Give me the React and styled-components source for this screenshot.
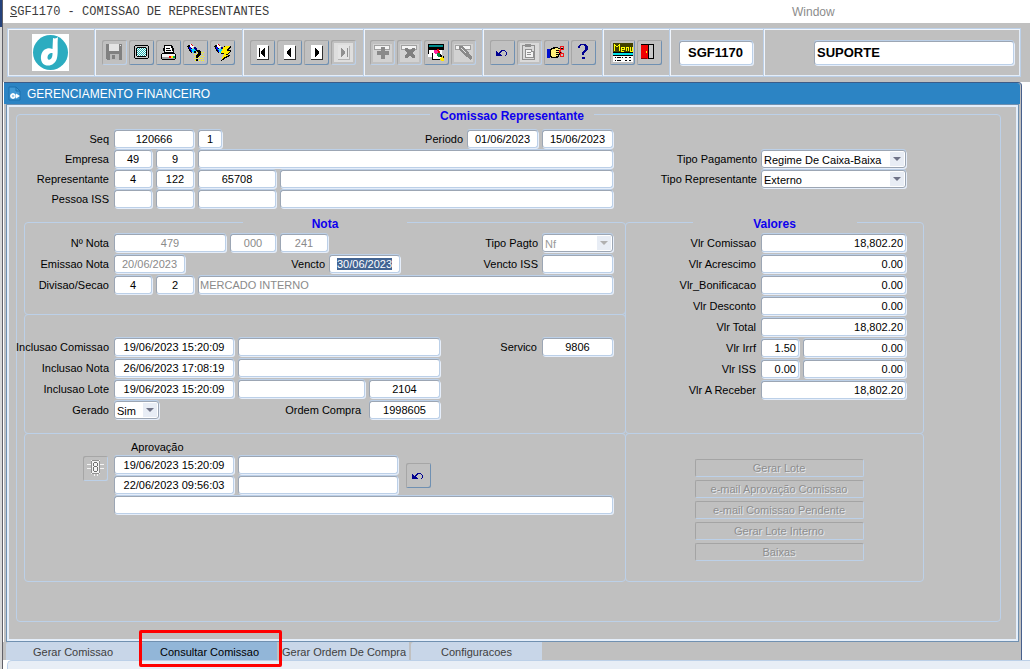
import React, { useEffect, useRef } from "react";
import styled, { createGlobalStyle, css } from "styled-components";

const GlobalStyle = createGlobalStyle`
  * {
    box-sizing: border-box;
  }

  body {
    margin: 0;
    background: #ffffff;
    color: #000000;
    font-family: "Liberation Sans", Arial, sans-serif;
    font-size: 11px;
    line-height: 14px;
  }

  button,
  input,
  select {
    margin: 0;
    font: inherit;
    color: inherit;
  }
`;

const Shell = styled.div`
  display: flex;
  min-height: 100vh;
  background: #ffffff;
`;

const DesktopEdge = styled.div`
  flex: none;
  width: 3px;
  border-right: 1px solid #606068;
  background: linear-gradient(#24427c 27px, #d8d8d8 27px);
`;

const Main = styled.div`
  flex: 1;
  min-width: 0;
  display: flex;
  flex-direction: column;
`;

const MenuBar = styled.header`
  display: flex;
  align-items: center;
  height: 23px;
  padding-left: 7px;
  background: #ffffff;
`;

const WindowTitle = styled.h1`
  flex: 782;
  margin: 0;
  font-family: "Liberation Mono", monospace;
  font-size: 12px;
  font-weight: normal;
  color: #3c3c3c;
`;

const MenuLink = styled.a`
  flex: 238;
  font-size: 12px;
  color: #8c8c8c;
  text-decoration: none;
`;

const ToolbarArea = styled.div`
  padding: 5px 9px 5px 4px;
  background: #c0c0c0;
`;

const Toolbar = styled.div`
  display: flex;
  height: 49px;
  border: 1px solid #bcd0e8;
  border-width: 1px 1px 1px 0;
  box-shadow: inset 0 1px #f0f5fc, inset -1px -1px #e4edf8;
`;

const ToolGroup = styled.div`
  flex: ${(props) => (props.$grow ? "1" : "none")};
  width: ${(props) => props.$width}px;
  display: flex;
  align-items: center;
  justify-content: ${(props) => (props.$grow ? "flex-end" : "center")};
  gap: 2px;
  padding-right: ${(props) => (props.$grow ? "6px" : "0")};
  border-left: 1px solid #bcd0e8;
  box-shadow: inset 1px 0 #f0f5fc;
`;

const PlainGroup = styled(ToolGroup)`
  padding-right: 2px;
`;

const ToolButton = styled.button`
  flex: none;
  width: 25px;
  height: 25px;
  padding: 0;
  border: none;
  border-radius: 2px;
  background: #c0c0c0;
  box-shadow: inset 1px 1px #a6a6a6,
    inset -1px -1px ${(props) => (props.disabled ? "#bcd0e8" : "#6f90b2")};

  svg {
    display: block;
    shape-rendering: crispEdges;
  }
`;

const fieldFrame = css`
  height: 18px;
  border: 1px solid;
  border-color: #9ca6b4 #bcd0e8 #bcd0e8 #9ca6b4;
  border-radius: 3px;
  background: #ffffff;
  box-shadow: 0 -1px #bcd0e8, 1px 1px #e6eefa;
`;

const Field = styled.input`
  ${fieldFrame}
  flex: ${(props) => (props.$width ? "none" : "1")};
  width: ${(props) => (props.$width ? `${props.$width}px` : "100%")};
  min-width: 0;
  padding: ${(props) => (props.$align === "left" ? "0 1px" : "0 2px")};
  text-align: ${(props) => props.$align || "center"};
  outline: none;

  &:disabled {
    color: #8a8a8a;
    background: #ffffff;
  }

  &::selection {
    background: rgba(64, 98, 146, 0.99);
    color: #ffffff;
  }
`;

const HeaderField = styled(Field)`
  flex: none;
  height: 24px;
  padding: 0 2px;
  font-size: 13px;
  font-weight: bold;
`;

const SelectFrame = styled.span`
  position: relative;
  flex: none;
  width: ${(props) => props.$width}px;
  height: 18px;

  svg {
    position: absolute;
    top: 2px;
    right: 2px;
    pointer-events: none;
  }
`;

const Select = styled.select`
  ${fieldFrame}
  display: block;
  width: 100%;
  padding: 2px 2px 0;
  appearance: none;
  border-color: #9ca6b4;

  &:disabled {
    color: #9a9a9a;
    opacity: 1;
  }
`;

const AppWindow = styled.main`
  margin: 0 8px 0 1px;
  border-top: 1px solid #3c5c88;
  border-right: 1px solid #48608c;
  border-radius: 0 4px 0 0;
  background: #c0c0c0;
`;

const TitleBar = styled.div`
  display: flex;
  align-items: center;
  gap: 6px;
  height: 21px;
  margin-right: 1px;
  padding-left: 4px;
  background: #2c84c4;
  color: #ffffff;
  border-radius: 0 3px 0 0;
`;

const TitleText = styled.h2`
  margin: 0;
  font-size: 12px;
  font-weight: normal;
`;

const Pane = styled.div`
  margin: 0 2px;
  padding: 1px 17px 19px 9px;
  border: 1px solid #7090b0;
  box-shadow: inset 0 0 0 2px #e4eefa;
`;

const frameLine = css`
  min-width: 0;
  margin: 0;
  padding: 0;
  border: 1px solid #bcd0e8;
  border-radius: 4px;
`;

const OuterFrame = styled.fieldset`
  ${frameLine}
  padding: 8px 0 39px 7px;
`;

const Legend = styled.legend`
  width: 164px;
  margin: 0 auto;
  padding: 4px 0 0;
  font-size: 12px;
  font-weight: bold;
  line-height: 12px;
  text-align: center;
  color: #0d00ee;
`;

const FormGrid = styled.div`
  display: grid;
  grid-template-columns: minmax(0, 602fr) minmax(0, 298fr) minmax(0, 76fr);
`;

const Rows = styled.div`
  display: flex;
  flex-direction: column;
  gap: ${(props) => props.$gap}px;
`;

const HeadRows = styled(Rows)`
  padding: 0 13px 6px 1px;
`;

const TypeRows = styled(Rows)`
  padding: 20px 18px 0 0;
`;

const NotaRows = styled(Rows)`
  padding-right: 12px;
`;

const ValoresRows = styled(Rows)`
  padding-right: 17px;
`;

const Row = styled.div`
  display: flex;
  align-items: center;
  gap: 4px;
`;

const RightPart = styled.div`
  display: flex;
  align-items: center;
  gap: 4px;
  margin-left: auto;
`;

// Long captions run out to the left over the frame line
const Caption = styled.label`
  flex: none;
  display: flex;
  justify-content: flex-end;
  width: ${(props) => (props.$width ? `${props.$width}px` : "auto")};
  padding-right: ${(props) => props.$pad || 0}px;
  white-space: nowrap;
`;

const RowCaption = styled(Caption)`
  width: 85px;
  padding-right: 1px;
`;

const NotaFrame = styled.fieldset`
  ${frameLine}
  padding: 4px 0 20px;
`;

const InclusaoFrame = styled.section`
  ${frameLine}
  grid-column: 1;
  margin-top: -1px;
  padding: 23px 12px 14px 0;
`;

const AprovacaoFrame = styled.section`
  ${frameLine}
  grid-column: 1;
  margin-top: -1px;
  padding: 6px 12px 67px 0;
`;

const AprovacaoTitle = styled.h3`
  margin: 0 0 2px 106px;
  font-size: 11px;
  font-weight: normal;
`;

const AprovacaoBody = styled.div`
  display: flex;
  align-items: flex-start;
  gap: 6px;
  padding-left: 58px;
`;

const AprovacaoFields = styled(Rows)`
  flex: 1;
`;

const AprovacaoPair = styled.div`
  display: flex;
  align-items: center;
  gap: 8px;
`;

const ValoresFrame = styled.fieldset`
  ${frameLine}
  grid-column: 2;
  grid-row: 2 / span 2;
  margin-left: -1px;
  padding: 4px 0 0;
`;

const ActionsFrame = styled.section`
  ${frameLine}
  grid-column: 2;
  grid-row: 4;
  display: flex;
  flex-direction: column;
  align-items: center;
  gap: 3px;
  margin: -1px 0 0 -1px;
  padding: 25px 0 0 9px;
`;

const ActionButton = styled.button`
  width: 169px;
  height: 18px;
  padding: 0;
  border: 1px solid;
  border-color: #a4a4a4 #bcd0e8 #bcd0e8 #a4a4a4;
  border-radius: 2px;
  background: #c0c0c0;

  &:disabled {
    color: #8e8e8e;
    text-shadow: 1px 1px #e4e8ee;
  }
`;

const TabBar = styled.nav`
  display: flex;
  height: 18px;
  margin-right: 8px;
  padding-left: 3px;
  border-right: 1px solid #48608c;
  background: #c0c0c0;
`;

const Tab = styled.button`
  position: relative;
  z-index: ${(props) => (props.$active ? 1 : 0)};
  width: ${(props) => props.$width}px;
  margin-right: 2px;
  padding: 2px 0 0;
  border: none;
  border-radius: 3px 0 0 0;
  background: ${(props) => (props.$active ? "#92b6d8" : "#c8d6e8")};
  color: ${(props) => (props.$active ? "#000000" : "#404040")};
  white-space: nowrap;
`;

const Marker = styled.span`
  position: absolute;
  inset: -12px -5px -7px -3px;
  border: 3px solid #ff0000;
  border-radius: 2px;
  pointer-events: none;
`;

const StatusBar = styled.footer`
  flex: 1;
  min-height: 9px;
  margin-left: 4px;
  border-top: 1px solid #bcd0e8;
  border-left: 1px solid #bcd0e8;
  border-radius: 5px 0 0 0;
  background: #e8eef6;
`;

const Icon = ({ children }) => (
  <svg width="25" height="25" viewBox="0 0 25 25" aria-hidden="true">
    {children}
  </svg>
);

const Logo = () => (
  <svg width="37" height="37" viewBox="0 0 37 37" role="img" aria-label="Logo">
    <rect width="37" height="37" fill="#fff" />
    <circle cx="18.5" cy="18.5" r="17.5" fill="#2cacc0" />
    <path
      d="M21 4 C23 5 25 4 26 3 C25 11 26.500 18 25 24 C23.500 30 18 33 13 31 C8 29 7.500 20 12 16 C15 14 18 14 20.500 15 Z"
      fill="#fff"
    />
    <path
      d="M20.500 19 C17 19 15.500 21 15.500 24 C16 27 19 26 20 23 C20.500 22 20.500 20 20.500 19Z"
      fill="#2cacc0"
    />
  </svg>
);

const FormIcon = () => (
  <svg width="13" height="15" viewBox="0 0 13 15" aria-hidden="true">
    <path d="M1 1h7l4 4v9H1z" fill="#3f97d3" stroke="#1d70ad" />
    <path d="M8 1v4h4" fill="none" stroke="#1d70ad" />
    <circle cx="5" cy="10" r="2" fill="none" stroke="#fff" strokeWidth="1.5" />
    <path d="M8 7.500l4 2.500-4 2.500z" fill="#fff" />
    <path d="M5 7v6M2 10h2" stroke="#fff" />
  </svg>
);

const SaveIcon = () => (
  <Icon>
    <path d="M4 4h16v16H5l-1-1z" fill="#808080" />
    <path d="M7 4h10v7H7z" fill="#e4e4e4" />
    <path d="M8 14h9v6H8z" fill="#b8b8b8" />
    <path d="M10 15h3v4h-3z" fill="#808080" />
    <path d="M18 5h1v1h-1z" fill="#e4e4e4" />
  </Icon>
);

const ScreenIcon = () => (
  <Icon>
    <path d="M6 5h13v1h1v12h-1v1H6v-1H5V6h1z" fill="#000" />
    <path d="M6 6h13v12H6z" fill="#c8c8c8" />
    <path d="M8 7h9v1h1v8h-1v1H8v-1H7V8h1z" fill="#000" />
    <path d="M8 8h9v8H8z" fill="#fff" />
    <path
      d="M8 8.500h9M9 9.500h8M8 10.500h9M9 11.500h8M8 12.500h9M9 13.500h8M8 14.500h9M9 15.500h8"
      stroke="#20b0b0"
      strokeDasharray="1 1"
    />
  </Icon>
);

const PrinterIcon = () => (
  <Icon>
    <path d="M8 5h8v1h1v2h1v5H8v-2H7V8h1z" fill="#000" />
    <path d="M9 6h6l2 6H9z" fill="#fff" />
    <path d="M10 8h4v1h-4zM10 10h5v1h-5z" fill="#000" />
    <path d="M6 13h13v1h1v5h-1v1H6v-1H5v-5h1z" fill="#000" />
    <path d="M6 14h13v3H6z" fill="#f4f4f4" />
    <path d="M6 17h13v2H6z" fill="#a0a0a0" />
    <path d="M13 16h2v2h-2z" fill="#f00" />
    <path d="M15 16h2v2h-2z" fill="#fe0" />
    <path d="M17 16h2v2h-2z" fill="#0a4" />
  </Icon>
);

const Torch = () => (
  <>
    <path d="M5 5h2v2h1v1h1v5H8v-1H7v-1H6V9H5V7H4V6h1z" fill="#000" />
    <path d="M6 7h2v2h1v3H8v-2H7V9H6z" fill="#00f" />
    <path d="M8 9h4v1h1v3h-3v-1H9v-2H8z" fill="#00d8ff" />
    <path d="M11 7h2v1h1v2h-2V9h-1z" fill="#000080" />
    <path d="M7 4h1v1h1v1h2v1h-1v1H8V7H7z" fill="#fff" />
    <path d="M8 4h1v1h1v1H9V5H8z" fill="#e00000" />
  </>
);

const QueryIcon = () => (
  <Icon>
    <path
      d="M12 12.500h9M11 14.500h10M12 16.500h9M11 18.500h10M12 20.500h9"
      stroke="#ff0"
      strokeDasharray="1 1"
    />
    <Torch />
    <path
      d="M13 10h4v1h1v4h-1v1h-1v1h-1v1h-2v-3h1v-1h1v-2h-1v-1h-1v2h-2v-2h1zM13 19h2v2h-2z"
      fill="#000"
    />
  </Icon>
);

const ExecuteIcon = () => (
  <Icon>
    <Torch />
    <path
      d="M14 6h7v2h-1v1h-1v1h2v2h-1v1h-1v1h-1v1h2v1h-1v1h-2v1h-2v1h-1v1h-2v1h-1v-1h1v-2h1v-2h1v-2h-3v-2h1V9h1V7h1z"
      fill="#000"
    />
    <path
      d="M15 6h5v1h-1v1h-1v1h-1v2h3v1h-1v1h-1v1h-2v1h2v1h-2v1h-2v1h-1v1h-1v-2h1v-2h1v-2h-3v-2h1V9h1V7h1z"
      fill="#ffed00"
    />
  </Icon>
);

const NavIcon = ({ d, off }) => (
  <Icon>
    {off && <path d="M3 3h19v19H3z" fill="#dedede" />}
    <path d="M7 6h12v14H7z" fill={off ? "#b4b4b4" : "#303030"} />
    <path d="M7 5h11v14H7z" fill={off ? "#e4e4e4" : "#fff"} />
    <path d={d} fill={off ? "#909090" : "#000"} />
  </Icon>
);

const NAV_FIRST = "M9 8h1v9H9zM14 8h1v9h-1v-1h-1v-1h-1v-1h-1v-3h1v-1h1V9h1z";
const NAV_PREV = "M13 8h1v9h-1v-1h-1v-1h-1v-1h-1v-3h1v-1h1V9h1z";
const NAV_NEXT = "M11 8h1v1h1v1h1v1h1v3h-1v1h-1v1h-1v1h-1z";
const NAV_LAST = "M10 8h1v1h1v1h1v1h1v3h-1v1h-1v1h-1v1h-1zM16 8h1v9h-1z";

const RecordBase = () => (
  <>
    <path d="M3 4h19v18H3z" fill="#d2d2d2" />
    <path d="M4 5h16v5H4z" fill="#a0a0a0" />
    <path d="M5 6h14v3H5z" fill="#f4f4f4" />
  </>
);

const InsertIcon = () => (
  <Icon>
    <RecordBase />
    <path d="M11 7h4v4h4v4h-4v4h-4v-4H7v-4h4z" fill="#8a8a8a" />
  </Icon>
);

const RemoveIcon = () => (
  <Icon>
    <RecordBase />
    <path
      d="M8 8h3v1h1v1h2V9h1V8h3v3h-1v1h-1v2h1v1h1v3h-3v-1h-1v-1h-2v1h-1v1H8v-3h1v-1h1v-2H9v-1H8z"
      fill="#808080"
    />
  </Icon>
);

const ClearIcon = () => (
  <Icon>
    <path d="M4 4h16v6H4z" fill="#000" />
    <path d="M5 5h14v2H5z" fill="#008c8c" />
    <path d="M4 9h1v8H4zM5 10h13v9H8v-2H5z" fill="#fff" />
    <path d="M4 9h15v1H4zM4 10h1v4H4zM8 13h1v6H8zM8 19h8v1H8z" fill="#000" />
    <path d="M10 10h3v1h1v3h-3v-1h-1z" fill="#ff20a0" />
    <path d="M13 9h2v2h1v2h-2v-2h-1z" fill="#e00000" />
    <path d="M13 13h3v1h1v3h-3v-1h-1z" fill="#009040" />
    <path d="M16 14h1v1h1v2h-2v-2z" fill="#000" />
    <path d="M17 17h2v1h1v3h-3v-1h-1v-2h1z" fill="#ffe800" />
    <path d="M19 16h1v2h-1z" fill="#000" />
  </Icon>
);

const CleanIcon = () => (
  <Icon>
    <RecordBase />
    <path
      d="M8 6h4v1h1v1h1v1h1v1h1v1h1v1h1v2h1v1h1v1h1v3h-1v1h-1v-1h-1v-1h-1v-1h-2v-1h-1v-1h-1v-1h-1v-1h-1v-1h-1v-1H9v-1H8z"
      fill="#8a8a8a"
    />
    <path d="M10 8h1v1h1v1h1v1h1v1h1v1h-1v-1h-1v-1h-1v-1h-1V9h-1z" fill="#e4e4e4" />
  </Icon>
);

const UndoIcon = () => (
  <Icon>
    <path
      d="M6 11h1v1h1v1h1v-1h1v-1h1v-1h4v1h1v1h1v3h-1v1h-1v-1h1v-3h-1v-1h-3v1h-1v1h-1v1h1v1h1v1H6z"
      fill="#000090"
    />
  </Icon>
);

const PasteIcon = () => (
  <Icon>
    <path d="M3 3h19v19H3z" fill="#dadada" />
    <path d="M5 5h12v14H5z" fill="none" stroke="#909090" />
    <path d="M8 4h6v3H8z" fill="#909090" />
    <path d="M8 9h6v2h2v6H8z" fill="#f4f4f4" stroke="#909090" />
    <path d="M10 12h4v1h-4zM10 14h4v1h-4z" fill="#909090" />
  </Icon>
);

const CutIcon = () => (
  <Icon>
    <path d="M3 9h3v9H3z" fill="#0010d0" />
    <path d="M7 8h2V7h5v1h6v2h-4v1h1v2h-1v2h-1v2h-1v1H7v-1H6V9h1z" fill="#000" />
    <path d="M8 9h3V8h3v1h5v1h-7v1h3v1h-3v1h3v1h-3v1h2v1h-2v1H8v-1H7v-6h1z" fill="#ffef78" />
    <path
      d="M16 6h3v3h-3zM16 13h3v3h-3zM17 9l-2 4M15 10l3 3"
      fill="none"
      stroke="#f01818"
    />
  </Icon>
);

const HelpIcon = () => (
  <Icon>
    <path
      d="M9 4h6v1h1v1h1v4h-1v1h-1v1h-1v1h-1v2h-2v-3h1v-1h1v-1h1V6h-1V5h-3v1H9v2H7V6h1V5h1zM11 17h3v2h-3z"
      fill="#000090"
    />
  </Icon>
);

const MenuIcon = () => (
  <Icon>
    <path d="M3 3h20v9H3z" fill="#404000" />
    <path
      d="M4 4v7M5 5l2 2 2-2M9 4v7M11 7h3v2h-3v2h3M11 7v4M16 11V7h2v4M20 7v4h2V7"
      fill="none"
      stroke="#ff0"
    />
    <path d="M3 12h20v10H3z" fill="#fff" />
    <path d="M3 12h20v1H3zM3 15h20v1H3z" fill="#000" />
    <path d="M3 13h20v2H3z" fill="#00e0e8" />
    <path
      d="M5 17h1v1H5zM7 17h4v1H7zM12 17h1v1h-1zM15 17h2v1h-2zM19 17h2v1h-2zM5 20h1v1H5zM7 20h4v1H7zM15 20h2v1h-2zM19 20h2v1h-2z"
      fill="#000"
    />
  </Icon>
);

const ExitIcon = () => (
  <Icon>
    <path d="M4 4h13v15H4z" fill="#000" />
    <path d="M12 5h4v13h-4z" fill="#c8c8c8" />
    <path d="M4 5h7v14H5v-1H4z" fill="#f00000" />
    <path d="M9 11h1v2H9z" fill="#ffef00" />
    <path d="M4 18h6v1H4z" fill="#800000" />
  </Icon>
);

const SignalIcon = () => (
  <Icon>
    <path
      d="M4 8h4v1H4zM4 12h4v1H4zM17 8h4v1h-4zM17 12h4v1h-4zM11 18h1v2h-1zM14 18h1v2h-1z"
      fill="#f4f4f4"
    />
    <path d="M8 4h9v14H8z" fill="#f4f4f4" />
    <path d="M9 4h7v1H9zM8 5h1v12H8zM16 5h1v12h-1zM9 17h7v1H9z" fill="#909090" />
    <path
      d="M11 6h3v1h-3zM10 7h1v3h-1zM14 7h1v3h-1zM11 10h3v1h-3zM10 11h1v4h-1zM14 11h1v4h-1zM11 15h3v1h-3z"
      fill="#707070"
    />
  </Icon>
);

const toolGroups = [
  {
    width: 148,
    tools: [
      { label: "Salvar", icon: <SaveIcon />, off: true },
      { label: "Tela", icon: <ScreenIcon /> },
      { label: "Imprimir", icon: <PrinterIcon /> },
      { label: "Entrar consulta", icon: <QueryIcon /> },
      { label: "Executar consulta", icon: <ExecuteIcon /> },
    ],
  },
  {
    width: 121,
    tools: [
      { label: "Primeiro", icon: <NavIcon d={NAV_FIRST} /> },
      { label: "Anterior", icon: <NavIcon d={NAV_PREV} /> },
      { label: "Proximo", icon: <NavIcon d={NAV_NEXT} /> },
      { label: "Ultimo", icon: <NavIcon d={NAV_LAST} off />, off: true },
    ],
  },
  {
    width: 119,
    tools: [
      { label: "Inserir", icon: <InsertIcon />, off: true },
      { label: "Remover", icon: <RemoveIcon />, off: true },
      { label: "Limpar", icon: <ClearIcon /> },
      { label: "Limpar registro", icon: <CleanIcon />, off: true },
    ],
  },
  {
    width: 120,
    tools: [
      { label: "Desfazer", icon: <UndoIcon /> },
      { label: "Colar", icon: <PasteIcon />, off: true },
      { label: "Recortar", icon: <CutIcon /> },
      { label: "Ajuda", icon: <HelpIcon /> },
    ],
  },
  {
    width: 67,
    tools: [
      { label: "Menu", icon: <MenuIcon /> },
      { label: "Sair", icon: <ExitIcon /> },
    ],
  },
];

const valores = [
  { id: "vlrComissao", label: "Vlr Comissao", value: "18,802.20" },
  { id: "vlrAcrescimo", label: "Vlr Acrescimo", value: "0.00" },
  { id: "vlrBonificacao", label: "Vlr_Bonificacao", value: "0.00" },
  { id: "vlrDesconto", label: "Vlr Desconto", value: "0.00" },
  { id: "vlrTotal", label: "Vlr Total", value: "18,802.20" },
  { id: "vlrIrrf", label: "Vlr Irrf", rate: "1.50", value: "0.00" },
  { id: "vlrIss", label: "Vlr ISS", rate: "0.00", value: "0.00" },
  { id: "vlrReceber", label: "Vlr A Receber", value: "18,802.20" },
];

const actions = [
  "Gerar Lote",
  "e-mail Aprovação Comissao",
  "e-mail Comissao Pendente",
  "Gerar Lote Interno",
  "Baixas",
];

const tabs = [
  { label: "Gerar Comissao", width: 134 },
  { label: "Consultar Comissao", width: 135, active: true },
  { label: "Gerar Ordem De Compra", width: 130 },
  { label: "Configuracoes", width: 131 },
];

const DropDown = ({ id, width, value, disabled }) => (
  <SelectFrame $width={width}>
    <Select id={id} defaultValue={value} disabled={disabled}>
      <option>{value}</option>
    </Select>
    <svg width="14" height="14" viewBox="0 0 14 14" aria-hidden="true">
      <rect width="14" height="14" fill="#e8edf5" />
      <path d="M3 5h8l-4 4z" fill={disabled ? "#b0b0b0" : "#707488"} />
    </svg>
  </SelectFrame>
);

const MainToolbar = () => (
  <ToolbarArea>
    <Toolbar>
      <PlainGroup $width={87}>
        <Logo />
      </PlainGroup>
      {toolGroups.map((group, index) => (
        <ToolGroup key={index} $width={group.width}>
          {group.tools.map((tool) => (
            <ToolButton
              key={tool.label}
              type="button"
              aria-label={tool.label}
              disabled={tool.off}
            >
              {tool.icon}
            </ToolButton>
          ))}
        </ToolGroup>
      ))}
      <PlainGroup $width={94}>
        <HeaderField $width={74} aria-label="Programa" defaultValue="SGF1170" />
      </PlainGroup>
      <ToolGroup $grow>
        <HeaderField
          $width={200}
          $align="left"
          aria-label="Usuario"
          defaultValue="SUPORTE"
        />
      </ToolGroup>
    </Toolbar>
  </ToolbarArea>
);

const HeadSection = () => (
  <>
    <HeadRows $gap={2}>
      <Row>
        <RowCaption htmlFor="seq">Seq</RowCaption>
        <Field id="seq" $width={80} defaultValue="120666" />
        <Field aria-label="Item" $width={24} defaultValue="1" />
        <RightPart>
          <Caption htmlFor="periodo">Periodo</Caption>
          <Field id="periodo" $width={71} defaultValue="01/06/2023" />
          <Field aria-label="Periodo final" $width={71} defaultValue="15/06/2023" />
        </RightPart>
      </Row>
      <Row>
        <RowCaption htmlFor="empresa">Empresa</RowCaption>
        <Field id="empresa" $width={38} defaultValue="49" />
        <Field aria-label="Filial" $width={38} defaultValue="9" />
        <Field aria-label="Nome empresa" />
      </Row>
      <Row>
        <RowCaption htmlFor="representante">Representante</RowCaption>
        <Field id="representante" $width={38} defaultValue="4" />
        <Field aria-label="Codigo" $width={38} defaultValue="122" />
        <Field aria-label="Cadastro" $width={78} defaultValue="65708" />
        <Field aria-label="Nome representante" />
      </Row>
      <Row>
        <RowCaption htmlFor="pessoaIss">Pessoa ISS</RowCaption>
        <Field id="pessoaIss" $width={38} />
        <Field aria-label="Codigo ISS" $width={38} />
        <Field aria-label="Cadastro ISS" $width={78} />
        <Field aria-label="Nome ISS" />
      </Row>
    </HeadRows>
    <TypeRows $gap={2}>
      <RightPart>
        <Caption htmlFor="tipoPagamento">Tipo Pagamento</Caption>
        <DropDown id="tipoPagamento" width={145} value="Regime De Caixa-Baixa" />
      </RightPart>
      <RightPart>
        <Caption htmlFor="tipoRepresentante">Tipo Representante</Caption>
        <DropDown id="tipoRepresentante" width={145} value="Externo" />
      </RightPart>
    </TypeRows>
    <span />
  </>
);

const NotaSection = () => {
  const venctoRef = useRef(null);

  useEffect(() => {
    venctoRef.current.focus();
    venctoRef.current.select();
  }, []);

  return (
    <NotaFrame>
      <Legend>Nota</Legend>
      <NotaRows $gap={3}>
        <Row>
          <RowCaption htmlFor="nota">Nº Nota</RowCaption>
          <Field id="nota" $width={112} defaultValue="479" disabled />
          <Field aria-label="Serie" $width={46} defaultValue="000" disabled />
          <Field aria-label="Modelo" $width={48} defaultValue="241" disabled />
          <RightPart>
            <Caption htmlFor="tipoPagto">Tipo Pagto</Caption>
            <DropDown id="tipoPagto" width={71} value="Nf" disabled />
          </RightPart>
        </Row>
        <Row>
          <RowCaption htmlFor="emissao">Emissao Nota</RowCaption>
          <Field id="emissao" $width={71} defaultValue="20/06/2023" disabled />
          <Caption htmlFor="vencto" $width={136}>
            Vencto
          </Caption>
          <Field
            id="vencto"
            ref={venctoRef}
            $width={71}
            defaultValue="30/06/2023"
          />
          <RightPart>
            <Caption htmlFor="venctoIss">Vencto ISS</Caption>
            <Field id="venctoIss" $width={71} />
          </RightPart>
        </Row>
        <Row>
          <RowCaption htmlFor="divisao">Divisao/Secao</RowCaption>
          <Field id="divisao" $width={38} defaultValue="4" />
          <Field aria-label="Secao" $width={38} defaultValue="2" />
          <Field
            aria-label="Descricao divisao"
            $align="left"
            defaultValue="MERCADO INTERNO"
            disabled
          />
        </Row>
      </NotaRows>
    </NotaFrame>
  );
};

const InclusaoSection = () => (
  <InclusaoFrame>
    <Rows $gap={3}>
      <Row>
        <RowCaption htmlFor="incComissao">Inclusao Comissao</RowCaption>
        <Field id="incComissao" $width={120} defaultValue="19/06/2023 15:20:09" />
        <Field aria-label="Usuario comissao" $width={202} />
        <RightPart>
          <Caption htmlFor="servico" $pad={1}>
            Servico
          </Caption>
          <Field id="servico" $width={71} defaultValue="9806" />
        </RightPart>
      </Row>
      <Row>
        <RowCaption htmlFor="incNota">Inclusao Nota</RowCaption>
        <Field id="incNota" $width={120} defaultValue="26/06/2023 17:08:19" />
        <Field aria-label="Usuario nota" $width={202} />
      </Row>
      <Row>
        <RowCaption htmlFor="incLote">Inclusao Lote</RowCaption>
        <Field id="incLote" $width={120} defaultValue="19/06/2023 15:20:09" />
        <Field aria-label="Usuario lote" $width={127} />
        <Field aria-label="Lote" $width={71} defaultValue="2104" />
      </Row>
      <Row>
        <RowCaption htmlFor="gerado">Gerado</RowCaption>
        <DropDown id="gerado" width={45} value="Sim" />
        <Caption htmlFor="ordemCompra" $width={202} $pad={4}>
          Ordem Compra
        </Caption>
        <Field id="ordemCompra" $width={71} defaultValue="1998605" />
      </Row>
    </Rows>
  </InclusaoFrame>
);

const AprovacaoSection = () => (
  <AprovacaoFrame>
    <AprovacaoTitle>Aprovação</AprovacaoTitle>
    <AprovacaoBody>
      <ToolButton type="button" aria-label="Situacao" disabled>
        <SignalIcon />
      </ToolButton>
      <AprovacaoFields $gap={2}>
        <AprovacaoPair>
          <Rows $gap={2}>
            <Row>
              <Field
                aria-label="Primeira aprovacao"
                $width={120}
                defaultValue="19/06/2023 15:20:09"
              />
              <Field aria-label="Primeiro aprovador" $width={160} />
            </Row>
            <Row>
              <Field
                aria-label="Segunda aprovacao"
                $width={120}
                defaultValue="22/06/2023 09:56:03"
              />
              <Field aria-label="Segundo aprovador" $width={160} />
            </Row>
          </Rows>
          <ToolButton type="button" aria-label="Desfazer aprovacao">
            <UndoIcon />
          </ToolButton>
        </AprovacaoPair>
        <Row>
          <Field aria-label="Observacao" $align="left" />
        </Row>
      </AprovacaoFields>
    </AprovacaoBody>
  </AprovacaoFrame>
);

const ValoresSection = () => (
  <ValoresFrame>
    <Legend>Valores</Legend>
    <ValoresRows $gap={3}>
      {valores.map((item) => (
        <RightPart key={item.id}>
          <Caption htmlFor={item.id} $pad={1}>
            {item.label}
          </Caption>
          {item.rate && (
            <Field
              aria-label={`${item.label} %`}
              $width={38}
              $align="right"
              defaultValue={item.rate}
            />
          )}
          <Field
            id={item.id}
            $width={item.rate ? 103 : 145}
            $align="right"
            defaultValue={item.value}
          />
        </RightPart>
      ))}
    </ValoresRows>
  </ValoresFrame>
);

const App = () => {
  return (
    <>
      <GlobalStyle />
      <Shell>
        <DesktopEdge />
        <Main>
          <MenuBar>
            <WindowTitle>
              <u>S</u>GF1170 - COMISSAO DE REPRESENTANTES
            </WindowTitle>
            <MenuLink href="#window">Window</MenuLink>
          </MenuBar>
          <MainToolbar />
          <AppWindow>
            <TitleBar>
              <FormIcon />
              <TitleText>GERENCIAMENTO FINANCEIRO</TitleText>
            </TitleBar>
            <Pane>
              <OuterFrame>
                <Legend>Comissao Representante</Legend>
                <FormGrid>
                  <HeadSection />
                  <NotaSection />
                  <InclusaoSection />
                  <AprovacaoSection />
                  <ValoresSection />
                  <ActionsFrame>
                    {actions.map((label) => (
                      <ActionButton key={label} type="button" disabled>
                        {label}
                      </ActionButton>
                    ))}
                  </ActionsFrame>
                </FormGrid>
              </OuterFrame>
            </Pane>
          </AppWindow>
          <TabBar>
            {tabs.map((tab) => (
              <Tab
                key={tab.label}
                type="button"
                $width={tab.width}
                $active={tab.active}
              >
                {tab.label}
                {tab.active && <Marker />}
              </Tab>
            ))}
          </TabBar>
          <StatusBar />
        </Main>
      </Shell>
    </>
  );
};

export default App;
